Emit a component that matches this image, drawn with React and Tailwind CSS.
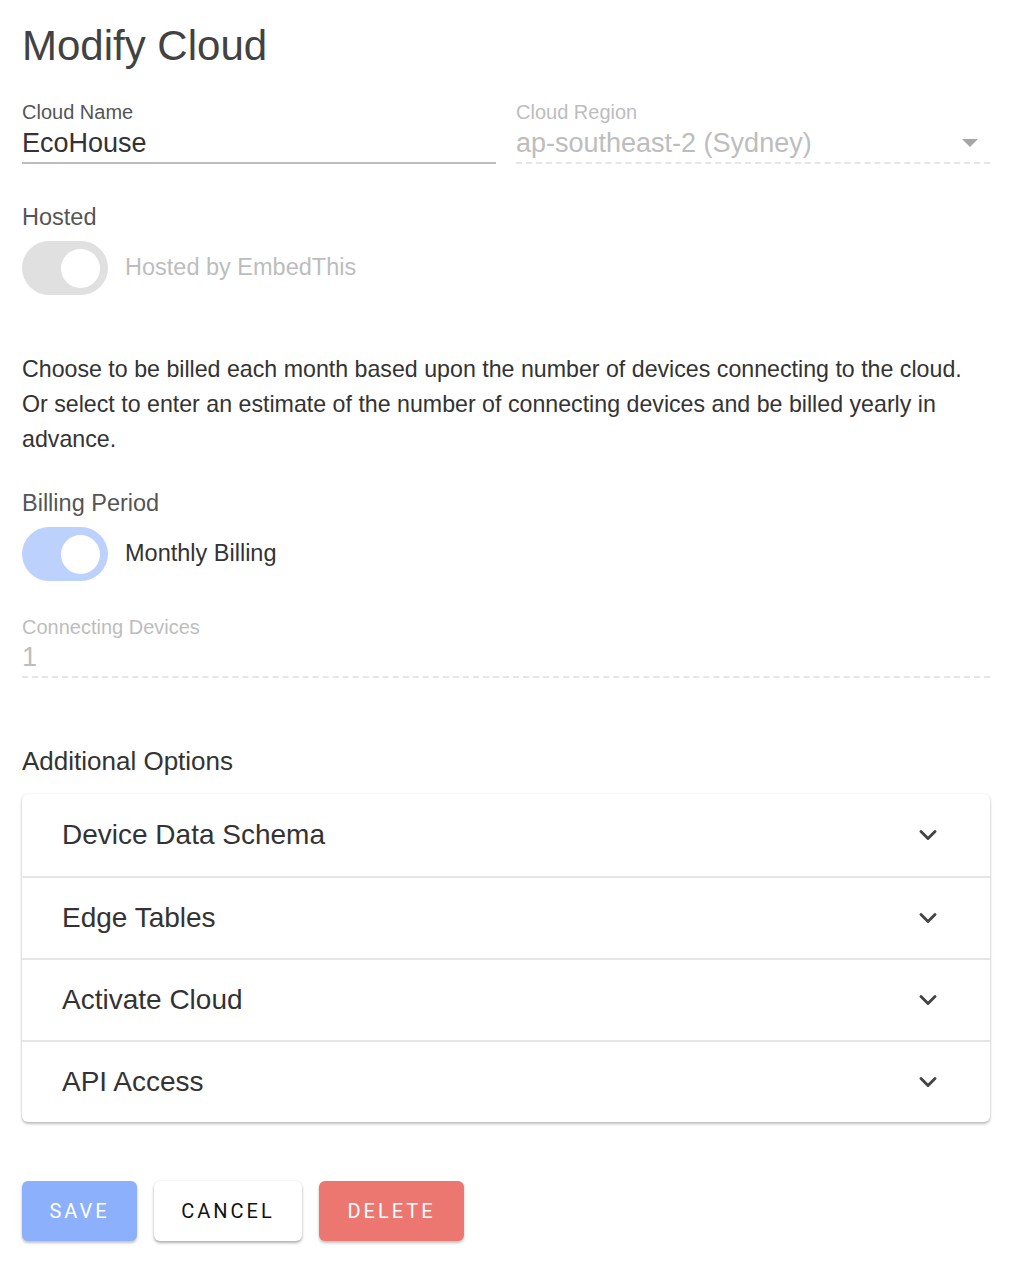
import { ChevronDown } from "lucide-react";

const rows = ["Device Data Schema", "Edge Tables", "Activate Cloud", "API Access"];

function Toggle({ on }) {
  return (
    <div
      className={
        "relative h-[54px] w-[86px] shrink-0 rounded-full " +
        (on ? "bg-[#bcd1fc]" : "bg-[#e0e0e0]")
      }
    >
      <div className="absolute left-[39px] top-[7.5px] h-[39px] w-[39px] rounded-full bg-white" />
    </div>
  );
}

export default function App() {
  return (
    <div className="min-h-[1277px] bg-white px-[22px] pt-[21px] font-['Liberation_Sans',Arial,sans-serif] text-[#333]">
      <h1 className="text-[42px] leading-[50px] text-[#424242]">Modify Cloud</h1>

      {/* Name + region */}
      <div className="mt-[29px] flex gap-[20px] pr-[12px]">
        <div className="flex-1">
          <div className="text-[20px] leading-[24px] text-[#555]">Cloud Name</div>
          <div className="mt-[2px] border-b-2 border-[#bdbdbd] pb-[2px] text-[27px] leading-[34px] text-[#333]">
            EcoHouse
          </div>
        </div>
        <div className="flex-1">
          <div className="text-[20px] leading-[24px] text-[#bdbdbd]">Cloud Region</div>
          <div className="mt-[2px] flex items-center justify-between border-b-2 border-dashed border-[#e6e6e6] pb-[2px] text-[27px] leading-[34px] text-[#bdbdbd]">
            <span>ap-southeast-2 (Sydney)</span>
            <svg width="16" height="10" viewBox="0 0 16 10" className="mr-[12px]">
              <path d="M0 1h16l-8 8z" fill="#a6a6a6" />
            </svg>
          </div>
        </div>
      </div>

      {/* Hosted */}
      <div className="mt-[39px] text-[23.5px] leading-[28px] text-[#555]">Hosted</div>
      <div className="mt-[10px] flex items-center gap-[17px]">
        <Toggle />
        <span className="text-[23.5px] text-[#bdbdbd]">Hosted by EmbedThis</span>
      </div>

      <p className="mt-[57px] pr-[20px] text-[23.2px] leading-[35px] text-[#333]">
        Choose to be billed each month based upon the number of devices connecting to the cloud.
        Or select to enter an estimate of the number of connecting devices and be billed yearly in
        advance.
      </p>

      {/* Billing */}
      <div className="mt-[32px] text-[23.5px] leading-[28px] text-[#555]">Billing Period</div>
      <div className="mt-[10px] flex items-center gap-[17px]">
        <Toggle on />
        <span className="text-[23.5px] text-[#333]">Monthly Billing</span>
      </div>

      <div className="mt-[34px] pr-[12px]">
        <div className="text-[20px] leading-[24px] text-[#bdbdbd]">Connecting Devices</div>
        <div className="mt-[1px] border-b-2 border-dashed border-[#e6e6e6] pb-[2px] text-[27px] leading-[34px] text-[#bdbdbd]">
          1
        </div>
      </div>

      <div className="mt-[67px] text-[26px] leading-[32px] text-[#333]">Additional Options</div>

      <div className="mr-[12px] mt-[17px] rounded-[6px] bg-white shadow-[0_2px_3px_rgba(0,0,0,0.25),0_0_2px_rgba(0,0,0,0.1)]">
        {rows.map((r, i) => (
          <div
            key={r}
            className={
              "flex h-[82px] items-center justify-between pl-[40px] pr-[48px] " +
              (i > 0 ? "border-t-2 border-[#e6e6e6]" : "")
            }
          >
            <span className="text-[28px] text-[#333]">{r}</span>
            <ChevronDown size={28} strokeWidth={2.5} className="text-[#444]" />
          </div>
        ))}
      </div>

      {/* Buttons */}
      <div className="mt-[59px] flex gap-[17px] font-['Roboto',sans-serif] text-[20px] tracking-[0.15em]">
        <button className="h-[60px] w-[115px] rounded-[6px] bg-[#8cb0fc] text-white shadow-[0_2px_3px_rgba(0,0,0,0.25)]">
          SAVE
        </button>
        <button className="h-[60px] w-[148px] rounded-[6px] bg-white text-[#111] shadow-[0_2px_3px_rgba(0,0,0,0.3),0_0_2px_rgba(0,0,0,0.1)]">
          CANCEL
        </button>
        <button className="h-[60px] w-[145px] rounded-[6px] bg-[#ec7670] text-white shadow-[0_2px_3px_rgba(0,0,0,0.25)]">
          DELETE
        </button>
      </div>
    </div>
  );
}
